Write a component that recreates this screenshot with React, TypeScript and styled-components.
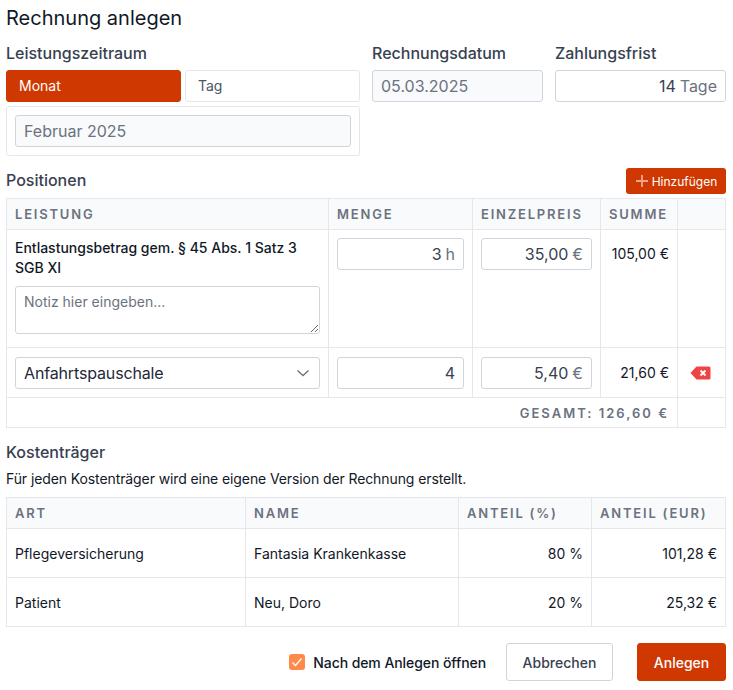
import styled, { createGlobalStyle } from "styled-components";
import { ReactNode } from "react";

const GlobalStyle = createGlobalStyle`
  * { box-sizing: border-box; }
  body {
    margin: 0;
    background: #ffffff;
    font-family: "Inter", "Liberation Sans", sans-serif;
    color: #111827;
  }
`;

const Page = styled.div`
  width: 733px;
  padding: 4px 7px 0 6px;
`;

const Title = styled.h1`
  margin: 0;
  font-size: 20px;
  line-height: 28px;
  font-weight: 400;
  color: #111827;
`;

const TopGrid = styled.div`
  display: grid;
  grid-template-columns: 354px 171px 171px;
  column-gap: 12px;
  margin-top: 10px;
`;

const Field = styled.div`
  display: flex;
  flex-direction: column;
`;

const Label = styled.div`
  font-size: 16px;
  line-height: 22px;
  font-weight: 500;
  color: #374151;
  margin-bottom: 6px;
`;

const TabRow = styled.div`
  display: grid;
  grid-template-columns: 175px 175px;
  column-gap: 4px;
`;

const Tab = styled.div<{ $active?: boolean }>`
  height: 32px;
  display: flex;
  align-items: center;
  padding: 0 12px 1px;
  font-size: 14px;
  border-radius: 3px;
  color: ${({ $active }) => ($active ? "#ffffff" : "#4b5563")};
  background: ${({ $active }) => ($active ? "#d03801" : "#ffffff")};
  border: 1px solid ${({ $active }) => ($active ? "#d03801" : "#e5e7eb")};
`;

const SubPanel = styled.div`
  margin-top: 4px;
  height: 50px;
  padding: 8px;
  border: 1px solid #e5e7eb;
  border-radius: 3px;
`;

const Box = styled.div<{ $disabled?: boolean; $end?: boolean }>`
  height: 32px;
  display: flex;
  align-items: center;
  justify-content: ${({ $end }) => ($end ? "flex-end" : "flex-start")};
  gap: 4px;
  padding: 0 8px;
  font-size: 16px;
  color: ${({ $disabled }) => ($disabled ? "#6b7280" : "#374151")};
  background: ${({ $disabled }) => ($disabled ? "#f9fafb" : "#ffffff")};
  border: 1px solid #d1d5db;
  border-radius: 3px;
`;

const Unit = styled.span`
  color: #6b7280;
`;

const SectionHead = styled.div`
  display: flex;
  align-items: center;
  justify-content: space-between;
  margin-top: 12px;
  height: 26px;
`;

const SectionTitle = styled.div`
  font-size: 16px;
  line-height: 20px;
  font-weight: 500;
  color: #374151;
  padding-bottom: 2px;
`;

const AddButton = styled.button`
  height: 26px;
  width: 100px;
  display: flex;
  align-items: center;
  justify-content: center;
  gap: 3px;
  padding: 0;
  border: 0;
  border-radius: 3px;
  background: #d03801;
  color: #ffffff;
  font: 400 12px "Inter", sans-serif;
`;

const Table = styled.table`
  width: 719px;
  table-layout: fixed;
  border-collapse: collapse;
  margin-top: 4px;
  font-size: 14px;
  color: #111827;
`;

const Head = styled.th`
  height: 31px;
  padding: 0 8px;
  background: #f9fafb;
  border: 1px solid #e5e7eb;
  font-size: 13px;
  font-weight: 600;
  letter-spacing: 1.8px;
  text-align: left;
  color: #6b7280;
  text-transform: uppercase;
`;

const Row = styled.tr<{ $height: number }>`
  height: ${({ $height }) => $height}px;
`;

const Cell = styled.td<{ $right?: boolean; $top?: boolean }>`
  padding: ${({ $top }) => ($top ? "8px 8px" : "0 8px")};
  border: 1px solid #e5e7eb;
  text-align: ${({ $right }) => ($right ? "right" : "left")};
  vertical-align: ${({ $top }) => ($top ? "top" : "middle")};
`;

const AmountLine = styled.div`
  height: 32px;
  line-height: 32px;
`;

const ServiceName = styled.div`
  font-size: 14px;
  line-height: 20px;
  font-weight: 500;
  color: #111827;
  margin-bottom: 8px;
`;

const Note = styled.textarea`
  display: block;
  width: 100%;
  height: 48px;
  padding: 5px 8px;
  font: 400 14px/20px "Inter", sans-serif;
  color: #111827;
  border: 1px solid #d1d5db;
  border-radius: 3px;
  outline: none;
  &::placeholder {
    color: #6b7280;
  }
`;

const SelectBox = styled(Box)`
  justify-content: space-between;
  color: #1f2937;
  letter-spacing: -0.15px;
`;

const TotalCell = styled(Cell)`
  font-size: 13px;
  font-weight: 600;
  letter-spacing: 2px;
  color: #6b7280;
`;

const IconCell = styled(Cell)`
  padding: 0 3px 0 0;
  text-align: center;
  svg {
    display: block;
    margin: 0 auto;
  }
`;

const Hint = styled.p`
  margin: 3px 0 8px;
  font-size: 14px;
  line-height: 20px;
  letter-spacing: -0.1px;
  color: #111827;
`;

const Footer = styled.div`
  display: flex;
  align-items: center;
  justify-content: flex-end;
  margin-top: 16px;
`;

const CheckLabel = styled.div`
  display: flex;
  align-items: center;
  gap: 8px;
  font-size: 14px;
  font-weight: 500;
  letter-spacing: -0.08px;
  color: #111827;
  margin-right: 20px;
`;

const CheckBox = styled.span`
  width: 16px;
  height: 16px;
  display: flex;
  align-items: center;
  justify-content: center;
  border-radius: 3px;
  background: #ff8a4c;
`;

const ActionButton = styled.button<{ $primary?: boolean }>`
  height: 38px;
  width: ${({ $primary }) => ($primary ? "89px" : "107px")};
  margin-left: ${({ $primary }) => ($primary ? "24px" : "0")};
  padding: 0;
  border-radius: 3px;
  font: 500 14px "Inter", sans-serif;
  color: ${({ $primary }) => ($primary ? "#ffffff" : "#374151")};
  background: ${({ $primary }) => ($primary ? "#d03801" : "#ffffff")};
  border: 1px solid ${({ $primary }) => ($primary ? "#d03801" : "#d1d5db")};
`;

const PlusIcon = () => (
  <svg width="14" height="14" viewBox="0 0 14 14" fill="none">
    <path d="M7 1v12M1 7h12" stroke="#f3a58c" strokeWidth="1.8" />
  </svg>
);

const Chevron = () => (
  <svg width="16" height="16" viewBox="0 0 16 16" fill="none">
    <path d="M2.5 5.5 8 10.5l5.5-5" stroke="#6b7280" strokeWidth="1.3" />
  </svg>
);

const CheckMark = () => (
  <svg width="12" height="12" viewBox="0 0 12 12" fill="none">
    <path d="M1.5 6.5 4.5 9.5 10.5 2.5" stroke="#ffffff" strokeWidth="1.3" />
  </svg>
);

const RemoveIcon = () => (
  <svg width="21" height="14" viewBox="0 0 21 14">
    <path
      d="M6.5 0.5h12.5a1.5 1.5 0 0 1 1.5 1.5v10a1.5 1.5 0 0 1-1.5 1.5H6.5L0.5 7z"
      fill="#ef4444"
    />
    <path d="M10.5 4.5l5 5M15.5 4.5l-5 5" stroke="#ffffff" strokeWidth="2" />
  </svg>
);

const Amount = ({ value, unit }: { value: string; unit?: ReactNode }) => (
  <Box $end>
    <span>{value}</span>
    {unit && <Unit>{unit}</Unit>}
  </Box>
);

const App = () => {
  return (
    <Page>
      <GlobalStyle />
      <Title>Rechnung anlegen</Title>
      <TopGrid>
        <Field>
          <Label>Leistungszeitraum</Label>
          <TabRow>
            <Tab $active>Monat</Tab>
            <Tab>Tag</Tab>
          </TabRow>
          <SubPanel>
            <Box $disabled>Februar 2025</Box>
          </SubPanel>
        </Field>
        <Field>
          <Label>Rechnungsdatum</Label>
          <Box $disabled>05.03.2025</Box>
        </Field>
        <Field>
          <Label>Zahlungsfrist</Label>
          <Amount value="14" unit="Tage" />
        </Field>
      </TopGrid>

      <SectionHead>
        <SectionTitle>Positionen</SectionTitle>
        <AddButton>
          <PlusIcon />
          Hinzufügen
        </AddButton>
      </SectionHead>
      <Table>
        <colgroup>
          <col style={{ width: 322 }} />
          <col style={{ width: 144 }} />
          <col style={{ width: 128 }} />
          <col style={{ width: 77 }} />
          <col style={{ width: 48 }} />
        </colgroup>
        <thead>
          <tr>
            <Head>Leistung</Head>
            <Head>Menge</Head>
            <Head>Einzelpreis</Head>
            <Head>Summe</Head>
            <Head />
          </tr>
        </thead>
        <tbody>
          <Row $height={118}>
            <Cell $top>
              <ServiceName>Entlastungsbetrag gem. § 45 Abs. 1 Satz 3 SGB XI</ServiceName>
              <Note placeholder="Notiz hier eingeben..." />
            </Cell>
            <Cell $top>
              <Amount value="3" unit="h" />
            </Cell>
            <Cell $top>
              <Amount value="35,00" unit="€" />
            </Cell>
            <Cell $top $right>
              <AmountLine>105,00 €</AmountLine>
            </Cell>
            <Cell />
          </Row>
          <Row $height={50}>
            <Cell>
              <SelectBox>
                Anfahrtspauschale
                <Chevron />
              </SelectBox>
            </Cell>
            <Cell>
              <Amount value="4" />
            </Cell>
            <Cell>
              <Amount value="5,40" unit="€" />
            </Cell>
            <Cell $right>21,60 €</Cell>
            <IconCell>
              <RemoveIcon />
            </IconCell>
          </Row>
          <Row $height={30}>
            <TotalCell colSpan={4} $right>
              GESAMT: 126,60 €
            </TotalCell>
            <Cell />
          </Row>
        </tbody>
      </Table>

      <SectionHead>
        <SectionTitle>Kostenträger</SectionTitle>
      </SectionHead>
      <Hint>Für jeden Kostenträger wird eine eigene Version der Rechnung erstellt.</Hint>
      <Table>
        <colgroup>
          <col style={{ width: 239 }} />
          <col style={{ width: 213 }} />
          <col style={{ width: 133 }} />
          <col style={{ width: 134 }} />
        </colgroup>
        <thead>
          <tr>
            <Head>Art</Head>
            <Head>Name</Head>
            <Head>Anteil (%)</Head>
            <Head>Anteil (EUR)</Head>
          </tr>
        </thead>
        <tbody>
          <Row $height={49}>
            <Cell>Pflegeversicherung</Cell>
            <Cell>Fantasia Krankenkasse</Cell>
            <Cell $right>80 %</Cell>
            <Cell $right>101,28 €</Cell>
          </Row>
          <Row $height={49}>
            <Cell>Patient</Cell>
            <Cell>Neu, Doro</Cell>
            <Cell $right>20 %</Cell>
            <Cell $right>25,32 €</Cell>
          </Row>
        </tbody>
      </Table>

      <Footer>
        <CheckLabel>
          <CheckBox>
            <CheckMark />
          </CheckBox>
          Nach dem Anlegen öffnen
        </CheckLabel>
        <ActionButton>Abbrechen</ActionButton>
        <ActionButton $primary>Anlegen</ActionButton>
      </Footer>
    </Page>
  );
};

export default App;
